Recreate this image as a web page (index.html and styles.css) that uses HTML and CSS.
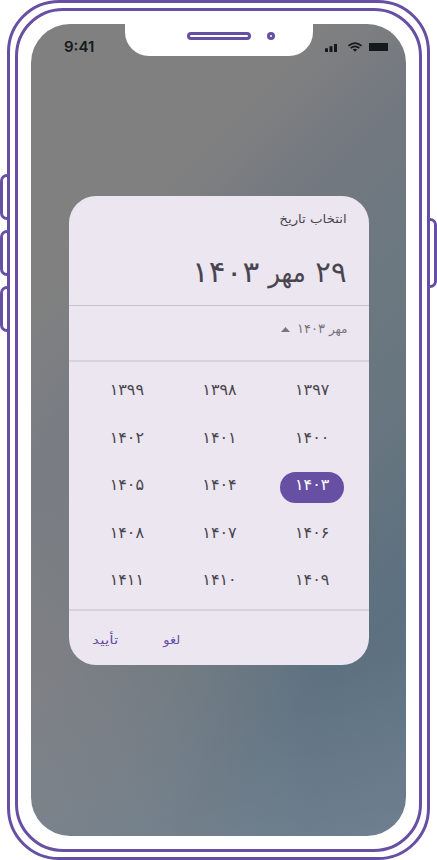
FILE: index.html
```html
<!DOCTYPE html>
<html lang="fa" dir="rtl">
<head>
<meta charset="utf-8">
<title>انتخاب تاریخ</title>
<link rel="stylesheet" href="styles.css">
</head>
<body>
<div class="stage">
  <i class="side mute"></i><i class="side up"></i><i class="side down"></i><i class="side power"></i>
  <div class="frame">
    <div class="bezel">
      <div class="screen">
        <div class="notch" dir="ltr"><span class="speaker"></span><span class="camera"></span></div>
        <header class="status" dir="ltr">
          <span class="clock">9:41</span>
          <svg class="signals" width="64" height="12" viewBox="0 0 64 12">
            <g fill="#14191c">
              <rect x="0" y="6.3" width="3" height="3.7"/><rect x="4.5" y="4.2" width="3" height="5.8"/><rect x="9" y="2" width="3" height="8"/>
              <rect x="44" y="1" width="19" height="8"/>
              <path d="M27.7 7.4 30 9.8 32.3 7.4Q30 5.9 27.7 7.4Z"/>
            </g>
            <g fill="none" stroke="#14191c" stroke-width="1.7"><path d="M23.4 3.9Q30-1.7 36.6 3.9"/><path d="M25.6 6.2Q30 2.5 34.4 6.2"/></g>
          </svg>
        </header>
        <main class="card">
          <section class="head">
            <p class="label"><span>انتخاب تاریخ</span></p>
            <h1 class="date"><span class="num">۲۹</span><span class="word">مهر</span><span class="num">۱۴۰۳</span></h1>
          </section>
          <section class="month"><span class="mword">مهر</span><span class="mnum">۱۴۰۳</span><svg width="9" height="5" viewBox="0 0 9 5"><path d="M0 5 4.5 0 9 5Z" fill="#79747e"/></svg></section>
          <section class="years">
            <span>۱۳۹۷</span><span>۱۳۹۸</span><span>۱۳۹۹</span>
            <span>۱۴۰۰</span><span>۱۴۰۱</span><span>۱۴۰۲</span>
            <span class="selected">۱۴۰۳</span><span>۱۴۰۴</span><span>۱۴۰۵</span>
            <span>۱۴۰۶</span><span>۱۴۰۷</span><span>۱۴۰۸</span>
            <span>۱۴۰۹</span><span>۱۴۱۰</span><span>۱۴۱۱</span>
          </section>
          <footer class="actions"><span class="cancel">لغو</span><span class="confirm">تأیید</span></footer>
        </main>
      </div>
    </div>
  </div>
</div>
</body>
</html>
```
FILE: styles.css
```css
* { box-sizing: border-box; }
body { margin: 0; background: #fff; overflow: hidden; font-family: "DejaVu Sans", "Noto Sans", sans-serif; color: #49454f; }
.stage { position: relative; width: 437px; height: 860px; padding: 0 7px; }
.side { position: absolute; left: 0; width: 14px; height: 46px; border: 3px solid #6750a4; border-radius: 7px; }
.mute { top: 174px; }
.up { top: 230px; }
.down { top: 286px; }
.power { left: auto; right: 0; top: 218px; height: 70px; }
.frame { position: relative; height: 860px; padding: 5px; border: 3px solid #6750a4; border-radius: 52px; background: #fff; }
.bezel { height: 844px; padding: 13px; border: 3px solid #6750a4; border-radius: 48px; }
.screen { position: relative; height: 812px; border-radius: 39px; overflow: hidden; background: linear-gradient(to top, rgba(126,140,152,.4), rgba(126,140,152,0) 22%), radial-gradient(ellipse 290px 460px at 0 82%, rgba(128,128,132,.95), rgba(128,130,134,.5) 50%, rgba(128,131,136,0)), linear-gradient(135deg, #808080 0%, #808080 25%, #727880 38%, #6b7880 52%, #66757f 65%, #5c7080 80%, #64788a 100%); }
.notch { position: absolute; left: 94px; top: 0; width: 187.6px; height: 32px; background: #fff; border-radius: 0 0 24px 24px; padding: 8px 0 0 62px; display: flex; gap: 16px; }
.speaker { width: 64px; height: 8px; border: 3px solid #6750a4; border-radius: 4px; }
.camera { width: 8px; height: 8px; border: 3px solid #6750a4; border-radius: 4px; }
.status { height: 172px; padding: 13px 17px 0 33px; display: flex; justify-content: space-between; }
.clock { font: 600 15px/20px Inter, sans-serif; color: #14191c; }
.signals { margin-top: 5px; }
.card { width: 300px; height: 469px; margin: 0 auto; border-radius: 27px; background: #ece6f0; overflow: hidden; }
.head { height: 110px; padding: 12px 22px 0; border-bottom: 1px solid #cac4d0; }
.label { margin: 0; font-size: 12px; line-height: 22px; }
.label span { display: inline-block; transform: scaleX(1.11); transform-origin: right; }
.date { margin: 22px 0 0; font-weight: 400; font-size: 27px; line-height: 40px; display: flex; gap: 10px; }
.date .num { font-size: 29px; letter-spacing: .4px; }
.date .word { transform: scaleX(.9); transform-origin: right; line-height: 42px; }
.date .num:last-child { transform: scaleX(1.08); transform-origin: right; margin-right: -6px; }
.month { height: 56px; padding: 13px 21px 0; border-bottom: 2px solid #d8d2dc; display: flex; font-size: 12px; line-height: 20px; color: #79747e; gap: 4px; }
.mnum { font-size: 13px; letter-spacing: .3px; }
.month svg { margin: 8px 3px 0 0; }
.years { height: 249px; padding: 6px 11px 0; display: grid; grid-template-columns: repeat(3, 92.7px); grid-auto-rows: 47.6px; justify-content: center; justify-items: center; border-bottom: 2px solid #d8d2dc; font-size: 16px; }
.years span { width: 64px; height: 31px; margin-top: 9px; line-height: 26px; text-align: center; position: relative; left: 1px; }
.years .selected { background: #6750a4; color: #fff; border-radius: 16px; }
.actions { height: 54px; padding: 18px 23px 0; display: flex; justify-content: flex-end; gap: 44px; font-size: 12px; line-height: 22px; color: #6750a4; }
.cancel { transform: scaleX(1.08); }
.confirm { width: 26px; direction: rtl; text-align: left; transform: scaleX(1.3); transform-origin: left; margin-right: 2px; }
```
